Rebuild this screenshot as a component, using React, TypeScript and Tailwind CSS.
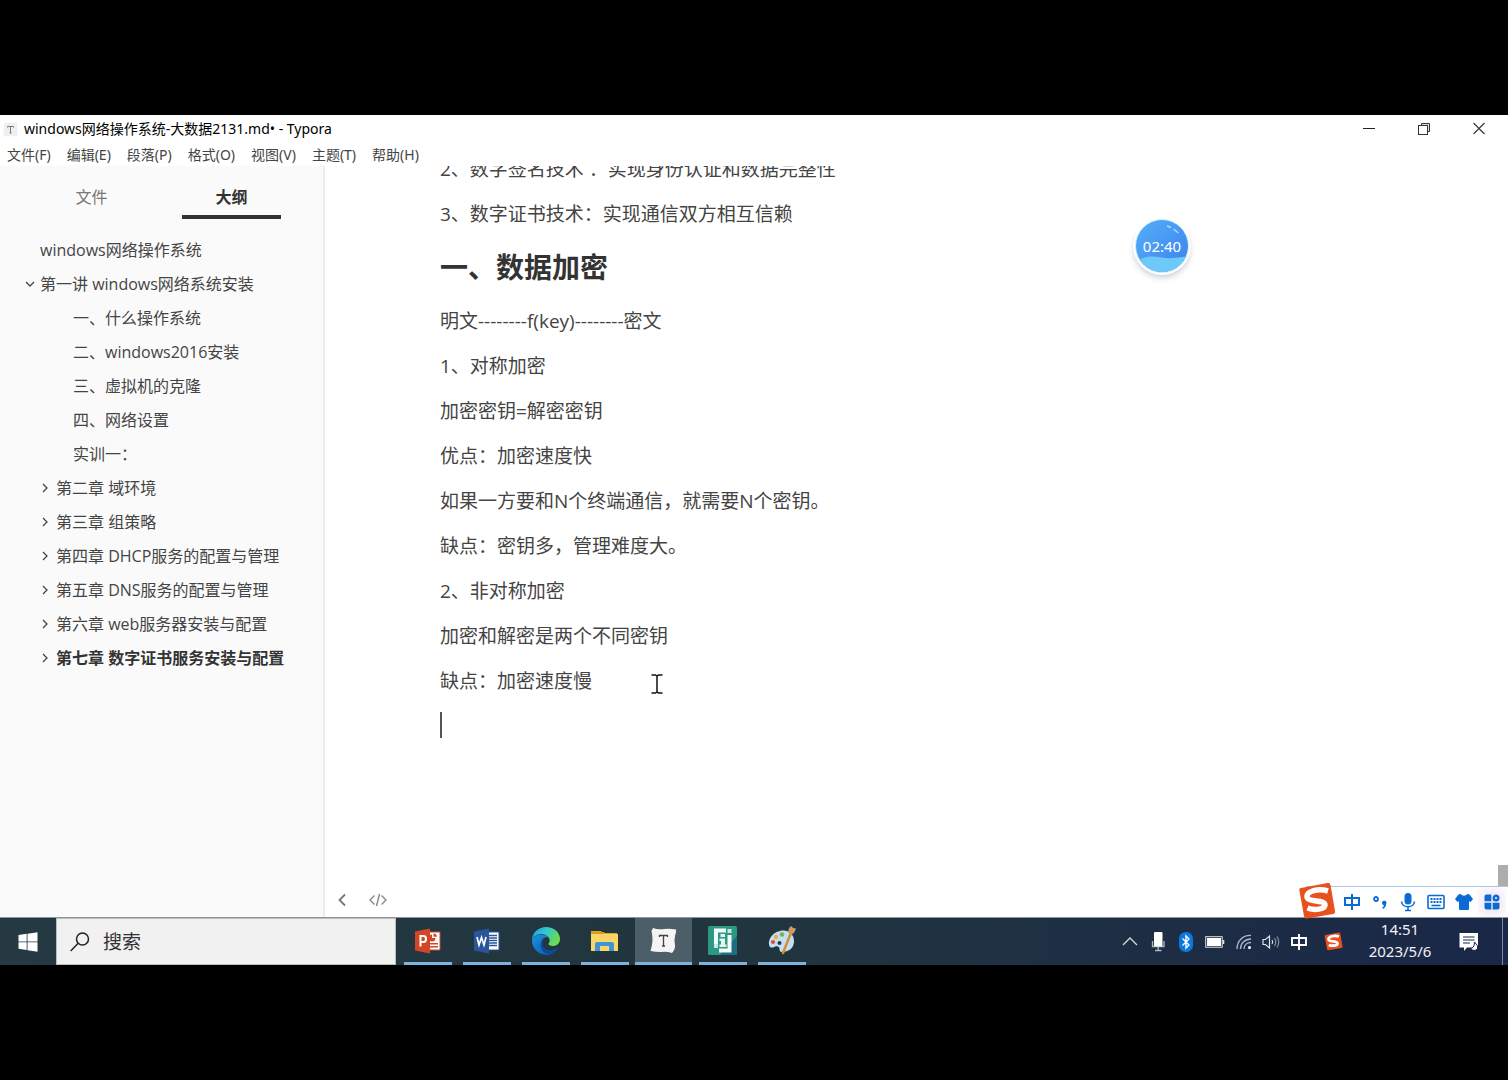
import React from "react";

const sans = "font-['Open_Sans','Noto_Sans_CJK_SC',sans-serif]";
const ui = "font-['Noto_Sans','Noto_Sans_CJK_SC',sans-serif]";

const menus = ["文件(F)", "编辑(E)", "段落(P)", "格式(O)", "视图(V)", "主题(T)", "帮助(H)"];

type Item = { text: string; level: 0 | 1 | 2; mark?: "open" | "closed"; bold?: boolean };

const outline: Item[] = [
  { text: "windows网络操作系统", level: 0 },
  { text: "第一讲 windows网络系统安装", level: 0, mark: "open" },
  { text: "一、什么操作系统", level: 2 },
  { text: "二、windows2016安装", level: 2 },
  { text: "三、虚拟机的克隆", level: 2 },
  { text: "四、网络设置", level: 2 },
  { text: "实训一：", level: 2 },
  { text: "第二章 域环境", level: 1, mark: "closed" },
  { text: "第三章 组策略", level: 1, mark: "closed" },
  { text: "第四章 DHCP服务的配置与管理", level: 1, mark: "closed" },
  { text: "第五章 DNS服务的配置与管理", level: 1, mark: "closed" },
  { text: "第六章 web服务器安装与配置", level: 1, mark: "closed" },
  { text: "第七章 数字证书服务安装与配置", level: 1, mark: "closed", bold: true },
];

const indent = { 0: "pl-6", 1: "pl-10", 2: "pl-[57px]" };

const paragraphs = [
  "明文--------f(key)--------密文",
  "1、对称加密",
  "加密密钥=解密密钥",
  "优点：加密速度快",
  "如果一方要和N个终端通信，就需要N个密钥。",
  "缺点：密钥多，管理难度大。",
  "2、非对称加密",
  "加密和解密是两个不同密钥",
  "缺点：加密速度慢",
];

function TitleBar() {
  return (
    <header className={`bg-white text-black ${ui}`}>
      <div className="flex h-7 items-center">
        <svg className="ml-[3px] mr-1.5 size-[15px]" viewBox="0 0 15 15">
          <path d="M1 1 14 0.5 14.5 14 0.5 14.5Z" fill="#efefef" />
          <path d="M4.5 5.500V4.500H10.5V5.500M7.5 4.500V11M6.500 11H8.500" fill="none" stroke="#777" />
        </svg>
        <h1 className="flex-1 text-sm">windows网络操作系统-大数据2131.md• - Typora</h1>
        <div className="flex pr-0.5">
          <button aria-label="最小化" className="flex w-[54px] justify-center">
            <svg className="size-[14px]" viewBox="0 0 14 14"><path d="M1 6.500H13" stroke="#222" /></svg>
          </button>
          <button aria-label="还原" className="flex w-[55px] justify-center">
            <svg className="size-[14px]" viewBox="0 0 14 14" fill="none" stroke="#333">
              <path d="M4.500 3V1.500H12.500V9.500H11" fill="#ddd" />
              <rect x="1.500" y="3.500" width="9" height="9" fill="#fff" />
            </svg>
          </button>
          <button aria-label="关闭" className="flex w-[55px] justify-center">
            <svg className="size-[14px]" viewBox="0 0 14 14"><path d="M1.500 1 12.500 12M12.500 1 1.500 12" stroke="#333" strokeWidth="1.100" /></svg>
          </button>
        </div>
      </div>
      <nav className="flex h-[23px] items-center gap-4 pl-[7px] text-[14px] text-[#444]">
        {menus.map((m) => (
          <button key={m} className="leading-none whitespace-nowrap">{m}</button>
        ))}
      </nav>
    </header>
  );
}

function Sidebar() {
  return (
    <aside className={`w-[325px] shrink-0 border-r-2 border-[#ececec] bg-[#fafafa] text-[16px] text-[#444] ${sans}`}>
      <div className="flex justify-between px-[42px]">
        <button className="h-[53px] w-[99px] border-b-4 border-transparent pt-3 text-[#777]">文件</button>
        <button className="h-[53px] w-[99px] border-b-4 border-[#333] pt-3 font-bold text-[#333]">大纲</button>
      </div>
      <ul className="pt-3.5">
        {outline.map((o) => (
          <li key={o.text} className={`h-[34px] leading-[34px] ${indent[o.level]}`}>
            <a href="#doc" className={`flex items-center whitespace-nowrap ${o.bold ? "font-bold text-[#333]" : ""}`}>
              <span className={`flex ${o.mark === "closed" ? "w-4" : "mr-1 w-3 justify-center"}`}>
                {o.mark && (
                  <svg className="size-[10px]" viewBox="0 0 10 10" fill="none" stroke="#444" strokeWidth="1.300">
                    <path d={o.mark === "open" ? "M1 3 5 7 9 3" : "M3 1 7 5 3 9"} />
                  </svg>
                )}
              </span>
              {o.text}
            </a>
          </li>
        ))}
      </ul>
    </aside>
  );
}

function SogouLogo({ className }: { className: string }) {
  return (
    <svg className={className} viewBox="0 0 38 38">
      <path d="M3 6Q1 6 1.300 8L6 34Q6.500 37 9 36.600L35 32Q37.500 31.500 37 29L32.500 3Q32 .5 29.500 1Z" fill="#e8501e" />
      <path d="M30 9C20 6 9 9 9 14.500C9 21 27 17 27 23C27 27 17 29 9.500 26" fill="none" stroke="#fff" strokeWidth="5.500" />
    </svg>
  );
}

function ImeBar() {
  const cell = "flex w-7 justify-center";
  return (
    <div className="absolute right-0 bottom-0 flex h-[31px] items-center border-t border-[#aac6e2] bg-white pr-0.5 text-[#0b6bd3]">
      <SogouLogo className="-mt-[3px] -ml-2 mr-0.5 size-[38px]" />
      <button aria-label="中文" className={cell}>
        <svg className="size-[18px]" viewBox="0 0 18 18" fill="none" stroke="currentColor" strokeWidth="2"><path d="M9 1V17M2 5H16V12H2Z" /></svg>
      </button>
      <button aria-label="标点" className={cell}>
        <svg className="size-[18px]" viewBox="0 0 18 18"><circle cx="5" cy="6" r="2" fill="none" stroke="currentColor" strokeWidth="1.800" /><path d="M11 10a2.200 2.200 0 1 1 4.300.6Q15 14.500 12 16L11.200 14.800Q12.800 14 12.900 12.300 11 12 11 10Z" fill="currentColor" /></svg>
      </button>
      <button aria-label="语音" className={cell}>
        <svg className="size-[20px]" viewBox="0 0 20 20" fill="none" stroke="currentColor" strokeWidth="1.600"><rect x="6.500" y="1" width="7" height="11.500" rx="3.500" fill="currentColor" stroke="none" /><path d="M3.500 9.500C4 16.500 16 16.500 16.500 9.500M10 15V18.500M7 18.500H13" /></svg>
      </button>
      <button aria-label="键盘" className={cell}>
        <svg className="size-[18px]" viewBox="0 0 18 18" fill="none" stroke="currentColor"><rect x="1" y="2.500" width="16" height="13" rx="1" strokeWidth="1.600" /><path d="M3.500 6H14.500M3.500 9H14.500" strokeWidth="2" strokeDasharray="2 1" /><path d="M4.500 12.500H13.500" strokeWidth="1.600" /></svg>
      </button>
      <button aria-label="皮肤" className={cell}>
        <svg className="size-[18px]" viewBox="0 0 18 18" fill="currentColor"><path d="M5.500 1Q9 4.500 12.500 1L14.500 1.500 18 6 15.500 9 14 8.300V16Q14 17 13 17H5Q4 17 4 16V8.300L2.500 9 0 6 3.500 1.500Z" /></svg>
      </button>
      <button aria-label="工具箱" className="flex h-full w-7 items-center justify-center bg-radial from-[#eedff6] to-white">
        <svg className="size-[16px]" viewBox="0 0 16 16" fill="currentColor"><path d="M2.500.5H7.300V7.300H.5V2.500Q.5.5 2.500.5ZM.5 8.700H7.300V15.500H2.500Q.5 15.500.5 13.500ZM8.700 8.700H15.500V13.500Q15.500 15.500 13.500 15.500H8.700Z" /><circle cx="12" cy="4" r="2.300" fill="none" stroke="currentColor" strokeWidth="2.400" /></svg>
      </button>
    </div>
  );
}

function Timer() {
  return (
    <div className="absolute top-[51px] right-[317px] flex size-[58px] items-center justify-center rounded-full bg-white shadow-md shadow-gray-300">
      <svg className="size-[54px]" viewBox="0 0 54 54">
        <defs>
          <linearGradient id="sky" x1="0" y1="0" x2="1" y2="1"><stop offset="0" stopColor="#55aef8" /><stop offset="1" stopColor="#3a83ec" /></linearGradient>
          <clipPath id="disc"><circle cx="27" cy="27" r="26" /></clipPath>
        </defs>
        <circle cx="27" cy="27" r="26.500" fill="url(#sky)" stroke="#d8f1fc" />
        <path clipPath="url(#disc)" d="M0 44C10 36 17 37 26 38.500C36 40 42 39 54 37V54H0Z" fill="#6cc9f8" />
        <path d="M32 7 36 8.500M38.500 10 43.500 14" stroke="#a8dcff" strokeWidth="1.400" />
      </svg>
      <time className="absolute font-['Noto_Sans',sans-serif] text-[15px] text-white">02:40</time>
    </div>
  );
}

function Editor() {
  return (
    <main id="doc" className="relative flex min-w-0 flex-1 flex-col bg-white">
      <article className={`flex-1 overflow-hidden pl-[115px] text-[19px] leading-[30px] text-[#444] ${sans}`}>
        <p className="-mt-3 mb-[15px]">2、数字签名技术 ：实现身份认证和数据完整性</p>
        <p>3、数字证书技术：实现通信双方相互信赖</p>
        <h2 className="mt-5 mb-[21px] text-[28px] leading-9 font-bold text-[#333]">一、数据加密</h2>
        {paragraphs.map((p) => (
          <p key={p} className="mb-[15px]">{p}</p>
        ))}
        <div className="mt-4 h-[26px] w-0.5 bg-[#555]" />
      </article>
      <footer className="flex h-[35px] items-center gap-[18px] pl-[9px] text-[#888]">
        <button aria-label="收起侧栏">
          <svg className="size-4" viewBox="0 0 16 16" fill="none" stroke="#777" strokeWidth="1.800"><path d="M11 2.500 5.500 8 11 13.500" /></svg>
        </button>
        <button aria-label="源代码模式">
          <svg className="h-4 w-5" viewBox="0 0 20 16" fill="none" stroke="currentColor" strokeWidth="1.400"><path d="M6.500 3.500 2 8 6.500 12.500M13.500 3.500 18 8 13.500 12.500M11.500 2 8.500 14" /></svg>
        </button>
      </footer>
      <svg className="absolute top-[508px] left-[325px] h-5 w-3.5" viewBox="0 0 14 20" fill="none" stroke="#111" strokeWidth="1.500">
        <path d="M1.500 1H5.500L7 2 8.500 1H12.500M7 2V18M1.500 19H5.500L7 18 8.500 19H12.500" />
      </svg>
      <Timer />
      <div className="absolute right-0 bottom-[30px] h-[22px] w-2.5 bg-[#adadad]" />
      <ImeBar />
    </main>
  );
}

const powerpoint = (
  <svg className="size-[26px]" viewBox="0 0 26 26">
    <path d="M12 4H25V22H12Z" fill="#fff" stroke="#d04626" />
    <path d="M17 6.500A3.500 3.500 0 1 0 20.500 10H17ZM18.500 5.500V8.800H21.800A3.300 3.300 0 0 0 18.500 5.500ZM15 15H23V16.500H15ZM15 18H23V19.500H15Z" fill="#d04626" />
    <path d="M0 3.500 15 .5V25.500L0 22.500Z" fill="#d04626" />
    <path d="M5.500 18.500V8H8.500Q11 8 11 11 11 14 8.500 14H5.500" fill="none" stroke="#fff" strokeWidth="2" />
  </svg>
);
const word = (
  <svg className="size-[26px]" viewBox="0 0 26 26">
    <path d="M13 4H25V22H13Z" fill="#fff" stroke="#2a5699" />
    <path d="M15 7.500H23M15 10H23M15 12.500H23M15 15H23M15 17.500H23" stroke="#2a5699" strokeWidth="1.300" />
    <path d="M0 3.500 15 .5V25.500L0 22.500Z" fill="#2a5699" />
    <path d="M3 9 5 17 7.500 9.500 10 17 12 9" fill="none" stroke="#fff" strokeWidth="1.700" />
  </svg>
);
const edge = (
  <svg className="size-[30px]" viewBox="0 0 30 30">
    <defs>
      <linearGradient id="e1" x1="0" y1="0" x2="1" y2=".5"><stop offset="0" stopColor="#1da0e4" /><stop offset=".5" stopColor="#34c6cf" /><stop offset="1" stopColor="#6bdc4b" /></linearGradient>
      <linearGradient id="e2" x1="0" y1="0" x2=".6" y2="1"><stop offset="0" stopColor="#1a92de" /><stop offset="1" stopColor="#0c66bd" /></linearGradient>
    </defs>
    <path d="M1 14C1.500 6 8 1 15 1C23 1 29 6.500 29 13C29 17.500 25.500 20 22 20C19 20 17 19 17.500 17.500C19 16 19 13.500 18 12C14 6 4 7 1 14Z" fill="url(#e1)" />
    <path d="M1 14C3 8 13 6.500 17.500 11C13 10.500 10 14 10 18C10 24 15 28 20 28.200C10 31 .5 24 1 14Z" fill="url(#e2)" />
    <path d="M13 13C9 20 14 25.500 21 24C24 23.500 26 22 27 21.500C25 26 21 28.500 18 28.500C9 27 7 17 13 13Z" fill="#0a4c9c" />
  </svg>
);
const explorer = (
  <svg className="h-[22px] w-[27px]" viewBox="0 0 27 22">
    <path d="M0 1H10L12 3H26V21H0Z" fill="#e9a820" />
    <path d="M0 4H27V21H0Z" fill="#fbd667" />
    <path d="M4 21V14Q4 12 6 12H21Q23 12 23 14V21H18V16H9V21Z" fill="#3f94d8" />
    <path d="M0 4H12L14 2H0Z" fill="#dc9a18" />
  </svg>
);
const typora = (
  <svg className="size-[27px]" viewBox="0 0 27 27">
    <path d="M3 1Q8 3 14 2 20 1.500 26 2.500 26.500 4 25 9 24 14 25 18 25.500 22 22 26 16 24 11 25 5 25 .5 24 2 19 2.500 14 2.500 8 1.500 4Z" fill="#f4f4f4" />
    <path d="M9.500 10V8.500H17.500V10M13.500 8.500V19M12 19H15" fill="none" stroke="#444" strokeWidth="1.300" />
  </svg>
);
const ispring = (
  <svg className="size-[29px]" viewBox="0 0 29 29">
    <rect width="29" height="29" rx="1.500" fill="#2c9a82" />
    <path d="M29 10V29H12Z" fill="#1d6f80" />
    <path d="M8 18V4.500H18M21.500 9V24.500H11" fill="none" stroke="#f3fbfa" strokeWidth="4" />
    <path d="M6 18H10V22H6ZM19.500 3H23.500V7H19.500Z" fill="#c9e7e2" />
    <path d="M12.500 8H17V11H12.500ZM11.500 12.500H17V18.500H18.500V21H11.500V18.500H13V15H11.500Z" fill="#e2f5f2" />
  </svg>
);
const paint = (
  <svg className="size-[29px]" viewBox="0 0 29 29">
    <path d="M13 5C21 3 27 8 27 15C27 22 22 26 15 26C11 26 14 22 11 20.500C8 19 6 23 3 21C0 17 3 7 13 5Z" fill="#c3e0f0" />
    <circle cx="12.500" cy="17" r="2" fill="#243a44" />
    <circle cx="6" cy="16" r="2" fill="#dc4a3c" /><circle cx="9" cy="11" r="2.200" fill="#f0a848" /><circle cx="15" cy="8.500" r="2.300" fill="#79b555" />
    <path d="M16 27 23.500 8" stroke="#d58b37" strokeWidth="2.500" strokeLinecap="round" />
    <path d="M21.500 7Q20.500 3 24 0 26 2.500 29 2.500 27.500 7.500 24.500 8.500Z" fill="#c99a68" />
  </svg>
);

const apps = [
  { name: "PowerPoint", icon: powerpoint },
  { name: "Word", icon: word },
  { name: "Edge", icon: edge },
  { name: "文件资源管理器", icon: explorer },
  { name: "Typora", icon: typora, active: true },
  { name: "iSpring", icon: ispring },
  { name: "画图", icon: paint },
];

function Tray() {
  return (
    <div className="ml-auto flex h-full items-center text-white">
      <button aria-label="显示隐藏的图标" className="flex w-7 justify-center">
        <svg className="size-4" viewBox="0 0 16 16" fill="none" stroke="#d5dae0" strokeWidth="1.300"><path d="M1 11 8 4 15 11" /></svg>
      </button>
      <button aria-label="麦克风" className="flex w-7 justify-center">
        <svg className="size-5" viewBox="0 0 20 20"><path d="M4.500 9V14.500H16V9M10.200 15V18.500M7 18.500H13.500" fill="none" stroke="#aeb9c2" strokeWidth="1.300" /><rect x="6" y="0" width="8.500" height="14.500" rx="1" fill="#fff" /></svg>
      </button>
      <button aria-label="蓝牙" className="flex w-7 justify-center">
        <svg className="h-5 w-4" viewBox="0 0 16 20"><rect x="1" width="14" height="20" rx="6.500" fill="#0a78e0" /><path d="M4.500 6.500 11 13 8 16V4L11 7 4.500 13.500" fill="none" stroke="#fff" strokeWidth="1.400" /></svg>
      </button>
      <button aria-label="电池" className="flex w-[30px] justify-center">
        <svg className="h-3 w-5" viewBox="0 0 20 12"><rect x=".7" y=".7" width="16.500" height="10.500" fill="none" stroke="#dfe4ea" /><rect x="2" y="2" width="14" height="8" fill="#fff" /><path d="M18.500 4V8" stroke="#dfe4ea" strokeWidth="1.600" /></svg>
      </button>
      <button aria-label="网络" className="flex w-7 justify-center">
        <svg className="size-4" viewBox="0 0 16 16" fill="none" stroke="#aeb8c6" strokeWidth="1.300"><path d="M1 15C1 7 7 1 15 1.500M4.500 15C4.500 9 9 5 15 5M8 15C8 11 11 8.500 15 8.500" /><circle cx="13.500" cy="13.500" r="1.500" fill="#fff" stroke="none" /></svg>
      </button>
      <button aria-label="音量" className="flex w-[26px] justify-center">
        <svg className="h-4 w-[18px]" viewBox="0 0 18 16" fill="none" stroke="#dfe4ea" strokeWidth="1.200"><path d="M1 5.500H3.500L7.500 2V14L3.500 10.500H1Z" /><path d="M10 6Q11.500 8 10 10" /><path d="M12.500 4Q15 8 12.500 12M15 2.500Q18.500 8 15 13.500" opacity=".55" /></svg>
      </button>
      <button aria-label="中文输入" className="flex w-[30px] justify-center">
        <svg className="size-[18px]" viewBox="0 0 18 18" fill="none" stroke="#fff" strokeWidth="1.900"><path d="M9 1V17M2 5H16V12H2Z" /></svg>
      </button>
      <button aria-label="搜狗输入法" className="flex w-[38px] justify-center"><SogouLogo className="size-[19px]" /></button>
      <button className="w-24 pb-[3px] text-center font-['Noto_Sans',sans-serif] text-[15px] leading-[22px] text-[#f0f2f5]">
        <span className="block">14:51</span>
        <span className="block">2023/5/6</span>
      </button>
      <button aria-label="通知" className="flex w-[42px] justify-center">
        <svg className="size-5" viewBox="0 0 20 20"><path d="M.5 1H19V15.500H8L5 19V15.500H.5Z" fill="#fff" /><path d="M4 5H15.500M4 8H15.500M4 11H11" stroke="#1b2a48" strokeWidth="1.200" /><path d="M15.500 10Q20 14 18.500 17 15 20 11 16.500 15.500 16.500 15.500 10Z" fill="#fff" stroke="#1b2a48" /></svg>
      </button>
      <button aria-label="显示桌面" className="ml-3 h-full w-1.5 border-l border-[#7d889b]" />
    </div>
  );
}

function Taskbar() {
  return (
    <div className="flex h-12 items-center border-t border-[#8b979c] bg-linear-to-r from-[#243942] via-[#21353f] to-[#1a2748]">
      <button aria-label="开始" className="flex w-14 justify-center">
        <svg className="size-5" viewBox="0 0 20 20" fill="#fff"><path d="M.5 3 8.700 1.800V9.500H.5ZM9.500 1.700 19.500.3V9.500H9.500ZM.5 10.300H8.700V18L.5 16.800ZM9.500 10.300H19.500V19.700L9.500 18.200Z" /></svg>
      </button>
      <label className="mr-[3px] flex h-full w-[340px] items-center border border-[#bdbdbd] bg-[#f1f1f1] pl-[13px]">
        <svg className="size-5" viewBox="0 0 20 20" fill="none" stroke="#222" strokeWidth="1.500"><circle cx="12.500" cy="7" r="6" /><path d="M8.200 11.300.7 19" /></svg>
        <input aria-label="搜索" placeholder="搜索" className={`ml-[13px] w-60 bg-transparent pt-0.5 text-[19px] outline-none placeholder:text-[#333] ${sans}`} />
      </label>
      <div className="flex h-full gap-0.5">
        {apps.map((a) => (
          <button key={a.name} aria-label={a.name} className={`flex h-full w-[57px] flex-col items-center ${a.active ? "bg-[#4c5e68]" : ""}`}>
            <span className="flex flex-1 items-center pt-px">{a.icon}</span>
            <span className={`h-[3px] bg-[#7db2de] ${a.active ? "w-full" : "w-12"}`} />
          </button>
        ))}
      </div>
      <Tray />
    </div>
  );
}

export default function App() {
  return (
    <div className="flex min-h-screen flex-col bg-black py-[115px]">
      <TitleBar />
      <div className="flex flex-1">
        <Sidebar />
        <Editor />
      </div>
      <Taskbar />
    </div>
  );
}
